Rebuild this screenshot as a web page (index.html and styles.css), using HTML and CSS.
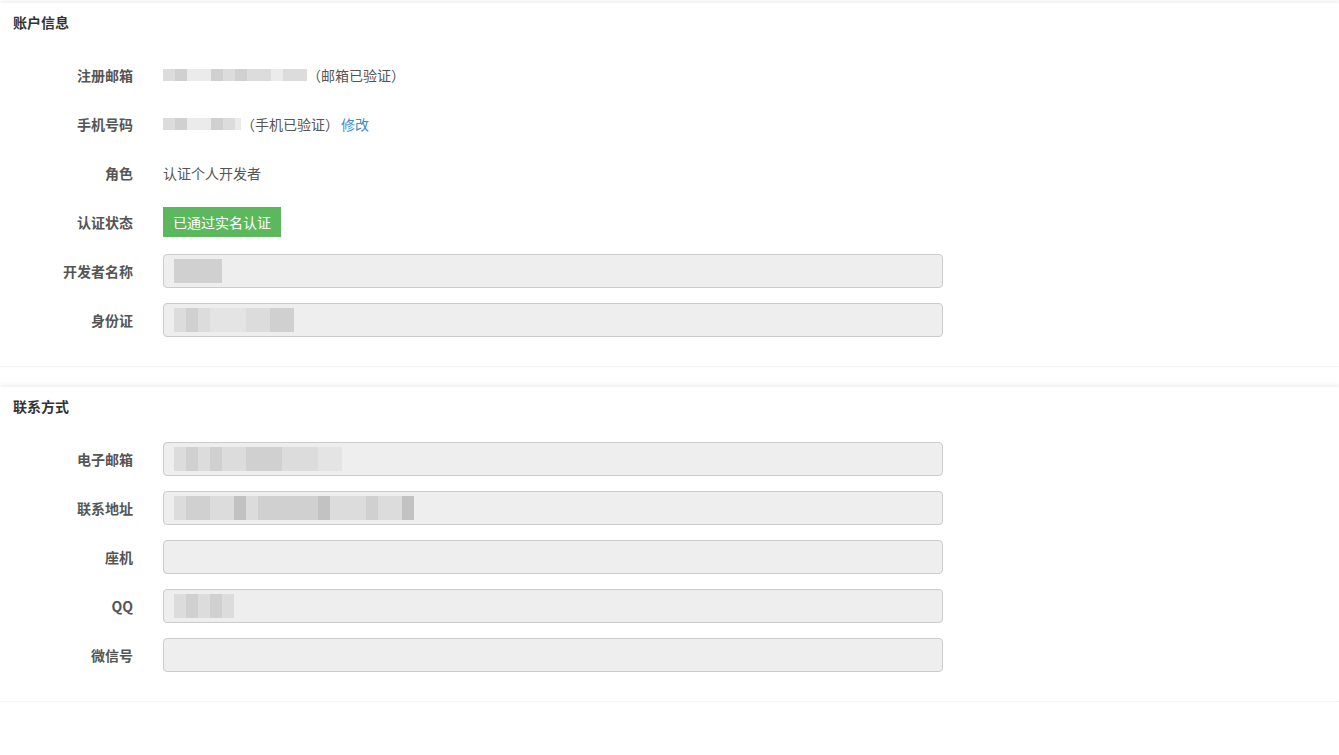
FILE: index.html
```html
<!DOCTYPE html>
<html lang="zh-CN">
<head>
    <meta charset="UTF-8">
    <title>账户信息</title>
    <link rel="stylesheet" href="styles.css">
</head>
<body>

    <!-- 账户信息 -->
    <div class="panel">
        <div class="panel-title">账户信息</div>
        <div class="form">
            <div class="row">
                <div class="label">注册邮箱</div>
                <div class="value">
                    <span class="mosaic">
                        <i class="c2"></i><i class="c3"></i><i class="c1"></i><i class="c1"></i><i class="c3"></i><i class="c2"></i><i class="c3"></i><i class="c2"></i><i class="c2"></i><i class="c1"></i><i class="c2"></i><i class="c2"></i>
                    </span>
                    <span>（邮箱已验证）</span>
                </div>
            </div>
            <div class="row">
                <div class="label">手机号码</div>
                <div class="value">
                    <span class="mosaic">
                        <i class="c2"></i><i class="c3"></i><i class="c1"></i><i class="c1"></i><i class="c3"></i><i class="c2"></i><i class="c1 half"></i>
                    </span>
                    <span>（手机已验证）</span><a class="link" href="#">修改</a>
                </div>
            </div>
            <div class="row">
                <div class="label">角色</div>
                <div class="value">认证个人开发者</div>
            </div>
            <div class="row">
                <div class="label">认证状态</div>
                <div class="value"><span class="badge">已通过实名认证</span></div>
            </div>
            <div class="row">
                <div class="label">开发者名称</div>
                <div class="input">
                    <span class="mosaic tall"><i class="c3"></i><i class="c3"></i><i class="c3"></i><i class="c3"></i></span>
                </div>
            </div>
            <div class="row">
                <div class="label">身份证</div>
                <div class="input">
                    <span class="mosaic tall"><i class="c2"></i><i class="c3"></i><i class="c2"></i><i class="c1"></i><i class="c1"></i><i class="c1"></i><i class="c2"></i><i class="c2"></i><i class="c3"></i><i class="c3"></i></span>
                </div>
            </div>
        </div>
    </div>

    <!-- 联系方式 -->
    <div class="panel">
        <div class="panel-title">联系方式</div>
        <div class="form">
            <div class="row">
                <div class="label">电子邮箱</div>
                <div class="input">
                    <span class="mosaic tall"><i class="c2"></i><i class="c3"></i><i class="c2"></i><i class="c3"></i><i class="c2"></i><i class="c2"></i><i class="c3"></i><i class="c3"></i><i class="c3"></i><i class="c2"></i><i class="c2"></i><i class="c2"></i><i class="c1"></i><i class="c1"></i></span>
                </div>
            </div>
            <div class="row">
                <div class="label">联系地址</div>
                <div class="input">
                    <span class="mosaic tall"><i class="c2"></i><i class="c3"></i><i class="c3"></i><i class="c2"></i><i class="c2"></i><i class="c4"></i><i class="c2"></i><i class="c3"></i><i class="c3"></i><i class="c3"></i><i class="c3"></i><i class="c3"></i><i class="c4"></i><i class="c2"></i><i class="c2"></i><i class="c2"></i><i class="c3"></i><i class="c2"></i><i class="c2"></i><i class="c4"></i></span>
                </div>
            </div>
            <div class="row">
                <div class="label">座机</div>
                <div class="input"></div>
            </div>
            <div class="row">
                <div class="label">QQ</div>
                <div class="input">
                    <span class="mosaic tall"><i class="c2"></i><i class="c3"></i><i class="c2"></i><i class="c3"></i><i class="c2"></i></span>
                </div>
            </div>
            <div class="row">
                <div class="label">微信号</div>
                <div class="input"></div>
            </div>
        </div>
    </div>

</body>
</html>
```

FILE: styles.css
```css
/* Global Styles */
* {
    margin: 0;
    padding: 0;
    box-sizing: border-box;
}

body {
    font-family: "Noto Sans CJK SC", "Liberation Sans", sans-serif;
    font-size: 14px;
    color: #555;
    background: #fff;
    padding-top: 3px;
}

/* Panels */
.panel {
    background: #fff;
    border-bottom: 1px solid #f4f4f4;
    box-shadow: 0 -2px 4px rgba(0, 0, 0, 0.07);
    margin-bottom: 20px;
}

.panel-title {
    height: 38px;
    line-height: 38px;
    padding-left: 13px;
    font-size: 14px;
    font-weight: bold;
    color: #333;
}

.form {
    padding: 17px 0 29px;
    display: flex;
    flex-direction: column;
    gap: 15px;
}

.row {
    display: flex;
    align-items: center;
    height: 34px;
}

.label {
    width: 133px;
    text-align: right;
    font-weight: bold;
    color: #555;
    flex-shrink: 0;
}

.value {
    margin-left: 30px;
    display: flex;
    align-items: center;
}

.link {
    color: #428bca;
    text-decoration: none;
    margin-left: 2px;
}

.badge {
    display: inline-block;
    background: #5cb85c;
    color: #fff;
    height: 30px;
    line-height: 30px;
    padding: 0 10px;
}

.input {
    margin-left: 30px;
    width: 780px;
    height: 34px;
    background: #eee;
    border: 1px solid #ccc;
    border-radius: 4px;
    display: flex;
    align-items: center;
    padding-left: 10px;
}

/* Blurred values */
.mosaic {
    display: inline-flex;
    height: 12px;
}

.mosaic.tall {
    height: 24px;
}

.mosaic i {
    width: 12px;
    height: 100%;
}

.mosaic i.half {
    width: 6px;
}

.mosaic .c1 { background: #ebebeb; }
.mosaic .c2 { background: #dcdcdc; }
.mosaic .c3 { background: #d0d0d0; }
.mosaic .c4 { background: #c2c2c2; }

.input .mosaic .c1 { background: #e4e4e4; }
```
